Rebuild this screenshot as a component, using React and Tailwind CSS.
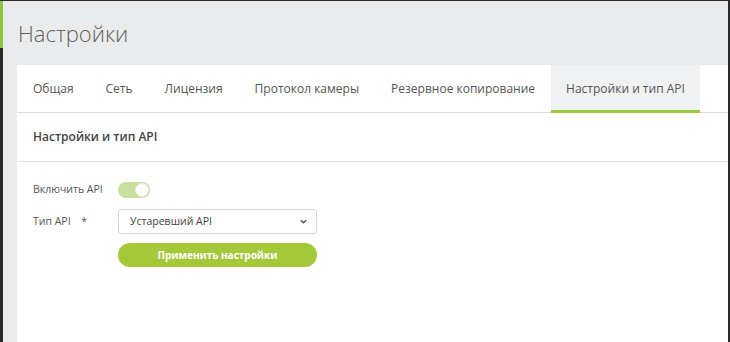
import React, { useState } from 'react';

const tabs = ['Общая', 'Сеть', 'Лицензия', 'Протокол камеры', 'Резервное копирование', 'Настройки и тип API'];

const App = () => {
  const [active, setActive] = useState(5);
  const [enabled, setEnabled] = useState(true);

  return (
    <div
      className="w-[730px] h-[342px] overflow-hidden bg-[#2a2a2a] pt-px pr-[2px] flex text-[#555]"
      style={{ fontFamily: '"Open Sans", "Liberation Sans", sans-serif' }}
    >
      {/* left accent strip */}
      <div className="w-[3px] flex flex-col">
        <div className="h-[47px] bg-[#8dc63f]" />
        <div className="flex-1 bg-[#2a2a2a]" />
      </div>

      <div className="flex-1 min-w-0 bg-[#eaebec] flex flex-col">
        <h1 className="h-[64px] pl-[15px] pt-[16px] text-[22px] font-light leading-[32px] text-[#626262]">
          Настройки
        </h1>

        <div className="flex-1 ml-[14px] bg-white flex flex-col">
          {/* tabs */}
          <div className="flex h-[48px] border-b border-[#dcdcdc]">
            {tabs.map((t, i) => (
              <button
                key={t}
                onClick={() => setActive(i)}
                className={
                  i === active
                    ? 'shrink-0 whitespace-nowrap px-[15px] h-[48px] text-[12px] text-[#555] bg-[#f0f1f2] border-b-[3px] border-[#9cc83c] pt-[3px] -mb-px'
                    : 'shrink-0 whitespace-nowrap px-[16px] h-[47px] text-[12px] text-[#555]'
                }
              >
                {t}
              </button>
            ))}
          </div>

          {/* section header */}
          <div className="h-[49px] flex items-center pl-[16px] border-b border-[#e4e4e4] text-[12px] font-semibold text-[#444]">
            Настройки и тип API
          </div>

          {/* form */}
          <div className="pl-[16px] pt-[19px] flex flex-col text-[10.5px]">
            <div className="flex items-center h-[17px]">
              <span className="w-[85px] text-[#555]">Включить API</span>
              <button
                onClick={() => setEnabled(!enabled)}
                className={
                  enabled
                    ? 'w-[32px] h-[16px] rounded-full bg-[#c8e09c] flex items-center justify-end pr-px'
                    : 'w-[32px] h-[16px] rounded-full bg-[#dcdcdc] flex items-center justify-start pl-px'
                }
              >
                <span className="w-[14px] h-[14px] rounded-full bg-white border border-[#e8e8e8]" />
              </button>
            </div>

            <div className="flex items-center mt-[11px] h-[25px]">
              <span className="w-[85px] text-[#555]">
                Тип API <span className="ml-[8px]">*</span>
              </span>
              <div className="w-[199px] h-[25px] border border-[#d6d6d6] rounded-[3px] flex items-center justify-between pl-[11px] pr-[8px] text-[#444]">
                <span>Устаревший API</span>
                <svg width="9" height="9" viewBox="0 0 10 10" fill="none">
                  <path d="M2 3.5 L5 6.5 L8 3.5" stroke="#555" strokeWidth="1.6" />
                </svg>
              </div>
            </div>

            <div className="flex mt-[9px]">
              <div className="w-[85px]" />
              <button className="w-[199px] h-[24px] rounded-full bg-[#a3c93a] text-white font-bold text-[10px]">
                Применить настройки
              </button>
            </div>
          </div>
        </div>
      </div>
    </div>
  );
};

export default App;
